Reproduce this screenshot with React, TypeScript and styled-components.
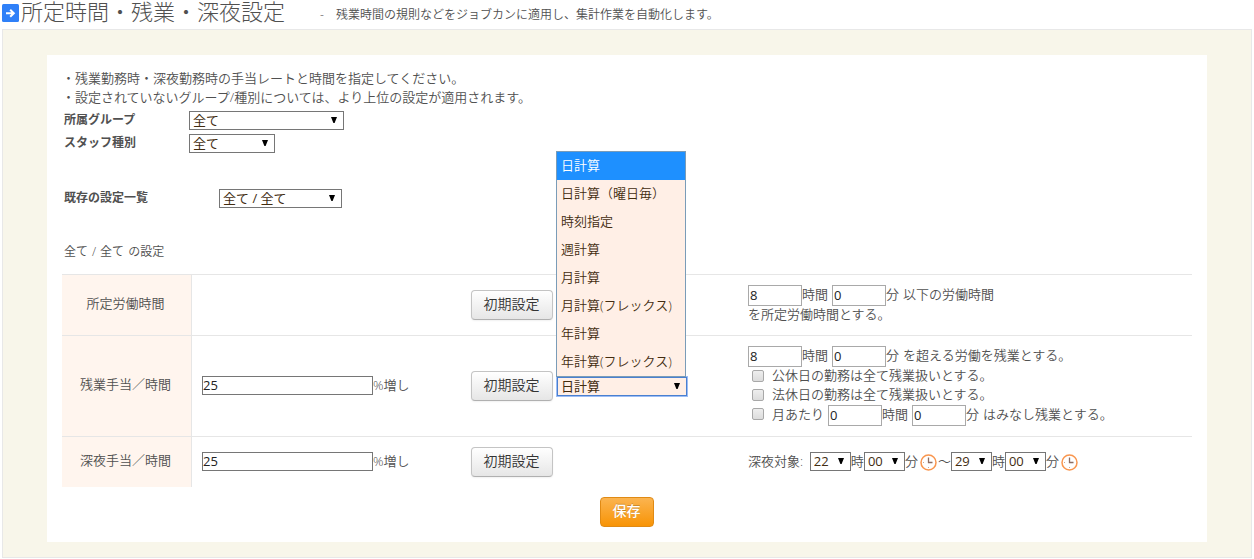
import React, { useId } from 'react';
import styled, { createGlobalStyle } from 'styled-components';

const GlobalStyle = createGlobalStyle`
  *, *::before, *::after { box-sizing: border-box; }
  body {
    margin: 0;
    background: #fff;
    color: #505050;
    font-family: "Open Sans", "Noto Sans CJK JP", sans-serif;
    font-size: 13px;
    font-weight: 350;
    line-height: 19px;
  }
  input, select, button { font: inherit; }
`;

const Header = styled.header`
  display: flex;
  align-items: flex-start;
  height: 29px;
  padding: 0 2px;
`;

const TitleIcon = styled.svg`
  flex: none;
  width: 17px;
  height: 18px;
  margin: 4px 2px 0 0;
`;

const Title = styled.h1`
  margin: 0;
  font-size: 22px;
  font-weight: 300;
  line-height: 22px;
  white-space: nowrap;
`;

const Lead = styled.p`
  display: flex;
  gap: 12px;
  margin: 5px 0 0 35px;
  font-size: 12px;
`;

const Frame = styled.main`
  margin: 0 2px 2px;
  padding: 25px 44px 15px;
  border: 1px solid #e8e8e8;
  background: #f8f6ea;
`;

const Sheet = styled.div`
  padding: 14px 15px 15px;
  background: #fff;
`;

const Note = styled.p`
  margin: 0 0 2px;
`;

const FilterRow = styled.div<{ $gap?: number; $labelWidth: number }>`
  display: grid;
  grid-template-columns: ${(p) => p.$labelWidth}px auto;
  justify-content: start;
  align-items: center;
  height: 23px;
  margin-top: ${(p) => p.$gap ?? 0}px;
  padding-left: 2px;
`;

const FilterLabel = styled.label`
  font-size: 12px;
  font-weight: 700;
  padding-bottom: 2px;
`;

const ScopeName = styled.p`
  display: flex;
  gap: 4px;
  margin: 32px 0 13px 2px;
  font-size: 12px;
`;

const SelectWrap = styled.span<{ $width: number }>`
  position: relative;
  display: inline-block;
  flex: none;
  width: ${(p) => p.$width}px;
  height: 19px;
`;

const SelectBox = styled.select<{ $active?: boolean }>`
  appearance: none;
  display: block;
  width: 100%;
  height: 19px;
  margin: 0;
  padding: 0 16px 0 3px;
  border: 1px solid ${(p) => (p.$active ? '#4a80d0' : '#767676')};
  border-radius: 0;
  outline: none;
  box-shadow: ${(p) => (p.$active ? '0 0 0 1px #9dbdf5' : 'none')};
  background: ${(p) => (p.$active ? '#ffefe6' : '#fff')};
  color: #422c10;
  font-weight: 400;
  line-height: 17px;
`;

const Arrow = styled.svg`
  position: absolute;
  top: 6px;
  right: 7px;
  width: 6px;
  height: 6px;
  pointer-events: none;
`;

const Options = styled.ul`
  position: absolute;
  z-index: 2;
  left: -1px;
  bottom: 19px;
  width: 130px;
  margin: 0;
  padding: 0;
  list-style: none;
  border: 1px solid #7a9cb8;
  background: #ffefe6;
  color: #422c10;
`;

const Option = styled.li<{ $selected?: boolean }>`
  height: 28px;
  padding-left: 4px;
  line-height: 27px;
  white-space: nowrap;
  background: ${(p) => (p.$selected ? '#1e90ff' : 'transparent')};
  color: ${(p) => (p.$selected ? '#fff' : 'inherit')};
`;

const Rules = styled.table`
  width: 100%;
  border-collapse: separate;
  border-spacing: 0;
  table-layout: fixed;
`;

const NameCol = styled.col`width: 130px;`;
const RateCol = styled.col`width: 269px;`;
const MethodCol = styled.col`width: 277px;`;

const NameCell = styled.th`
  padding: 8px 10px 11px 8px;
  border-top: 1px solid #e6e6e6;
  border-right: 1px solid #e6e6e6;
  background: #fff5ee;
  font-weight: inherit;
  text-align: center;
`;

const Cell = styled.td`
  padding: 10px;
  border-top: 1px solid #e6e6e6;
  vertical-align: middle;
`;

const Line = styled.div<{ $height: number }>`
  display: flex;
  align-items: flex-start;
  height: ${(p) => p.$height}px;
  line-height: ${(p) => p.$height - 2}px;
  white-space: pre;
`;

const Actions = styled.div`
  display: flex;
  align-items: center;
  gap: 4px;
  height: 30px;
`;

const RateInput = styled.input`
  width: 171px;
  height: 19px;
  padding: 0 0 2px;
  border: 1px solid #767676;
  color: #222;
  font-weight: 400;
`;

const HourInput = styled.input<{ $spaced?: boolean }>`
  flex: none;
  width: 54px;
  height: 21px;
  margin-left: ${(p) => (p.$spaced ? 4 : 0)}px;
  padding: 0 1px 2px;
  border: 1px solid #a9a9a9;
  color: #222;
  font-weight: 400;
`;

const Unit = styled.span`
  margin-right: 4px;
`;

const Check = styled.input`
  appearance: none;
  flex: none;
  width: 12px;
  height: 12px;
  margin: 3px 8px 0 4px;
  border: 1px solid #a8a8a8;
  border-radius: 2px;
  background: linear-gradient(#eee, #dcdcdc);
`;

const DefaultButton = styled.button`
  width: 82px;
  height: 30px;
  padding: 0 1px 4px 0;
  border: 1px solid #c4c4c4;
  border-bottom-color: #b0b0b0;
  border-radius: 4px;
  background: linear-gradient(#fff, #e6e6e6);
  box-shadow: 0 1px 2px rgba(0, 0, 0, 0.06);
  color: #333;
  font-size: 14px;
`;

const SaveButton = styled.button`
  display: block;
  width: 54px;
  height: 30px;
  margin: 10px auto 0;
  padding: 0 1px 4px 0;
  border: 1px solid #e08a14;
  border-radius: 4px;
  background: linear-gradient(#fbb450, #f89406);
  color: #fff;
  font-size: 14px;
  font-weight: 500;
  text-shadow: 0 -1px 0 rgba(0, 0, 0, 0.2);
`;

const ClockIcon = styled.svg`
  flex: none;
  width: 17px;
  height: 17px;
  margin: 2px 1px 0 2px;
`;

type SelectProps = {
  width: number;
  value: string;
  id?: string;
  label?: string;
  active?: boolean;
  children?: React.ReactNode;
};

function Select({ width, value, id, label, active, children }: SelectProps) {
  return (
    <SelectWrap $width={width}>
      <SelectBox id={id} aria-label={label} defaultValue={value} $active={active}>
        <option>{value}</option>
      </SelectBox>
      <Arrow viewBox="0 0 6 6" aria-hidden="true">
        <path d="M0 0h6L3.6 6H2.4z" fill="#000" />
      </Arrow>
      {children}
    </SelectWrap>
  );
}

function Clock() {
  return (
    <ClockIcon viewBox="0 0 17 17" aria-hidden="true">
      <circle cx="8.5" cy="8.5" r="7.5" fill="#fff" stroke="#f9964f" strokeWidth="1.5" />
      <path d="M8.5 3.5V8.5H12.5" fill="none" stroke="#8d6e63" strokeWidth="1.3" />
      <path d="M8 13.5h1M3 8.5h1" stroke="#c9a898" strokeWidth="1" />
    </ClockIcon>
  );
}

type FilterProps = { label: string; value: string; width: number; labelWidth: number; gap?: number };

function Filter({ label, value, width, labelWidth, gap }: FilterProps) {
  const id = useId();
  return (
    <FilterRow $labelWidth={labelWidth} $gap={gap}>
      <FilterLabel htmlFor={id}>{label}</FilterLabel>
      <Select id={id} width={width} value={value} />
    </FilterRow>
  );
}

function Duration({ hours, label }: { hours: string; label: string }) {
  return (
    <>
      <HourInput defaultValue={hours} aria-label={`${label} 時間`} />
      時間
      <HourInput $spaced defaultValue="0" aria-label={`${label} 分`} />
      <Unit>分</Unit>
    </>
  );
}

function TimePoint({ hour, label }: { hour: string; label: string }) {
  return (
    <>
      <Select width={41} value={hour} label={`${label} 時`} />
      時
      <Select width={41} value="00" label={`${label} 分`} />
      分
      <Clock />
    </>
  );
}

function CheckLine({ id, text }: { id: string; text: string }) {
  return (
    <Line $height={19}>
      <Check type="checkbox" id={id} />
      <label htmlFor={id}>{text}</label>
    </Line>
  );
}

const METHODS = [
  '日計算',
  '日計算（曜日毎）',
  '時刻指定',
  '週計算',
  '月計算',
  '月計算(フレックス)',
  '年計算',
  '年計算(フレックス)',
];

export default function App() {
  return (
    <>
      <GlobalStyle />
      <Header>
        <TitleIcon viewBox="0 0 17 18" aria-hidden="true">
          <rect width="17" height="18" rx="1.5" fill="#2f80f8" />
          <path d="M4 9.3h7.5M8.2 5.8l3.6 3.5-3.6 3.5" fill="none" stroke="#fff" strokeWidth="2" />
        </TitleIcon>
        <Title>所定時間・残業・深夜設定</Title>
        <Lead>
          <span>-</span>
          <span>残業時間の規則などをジョブカンに適用し、集計作業を自動化します。</span>
        </Lead>
      </Header>
      <Frame>
        <Sheet>
          <Note>
            ・残業勤務時・深夜勤務時の手当レートと時間を指定してください。
            <br />
            ・設定されていないグループ/種別については、より上位の設定が適用されます。
          </Note>
          <Filter label="所属グループ" value="全て" width={155} labelWidth={125} />
          <Filter label="スタッフ種別" value="全て" width={86} labelWidth={125} />
          <Filter label="既存の設定一覧" value="全て / 全て" width={123} labelWidth={155} gap={32} />
          <ScopeName>
            <span>全て</span>
            <span>/</span>
            <span>全て</span>
            <span>の設定</span>
          </ScopeName>
          <Rules>
            <colgroup>
              <NameCol />
              <RateCol />
              <MethodCol />
              <col />
            </colgroup>
            <tbody>
              <tr>
                <NameCell scope="row">所定労働時間</NameCell>
                <Cell />
                <Cell>
                  <Actions>
                    <DefaultButton type="button">初期設定</DefaultButton>
                  </Actions>
                </Cell>
                <Cell>
                  <Line $height={21}>
                    <Duration hours="8" label="所定労働時間" />
                    以下の労働時間
                  </Line>
                  <Line $height={19}>を所定労働時間とする。</Line>
                </Cell>
              </tr>
              <tr>
                <NameCell scope="row">残業手当／時間</NameCell>
                <Cell>
                  <Line $height={20}>
                    <RateInput defaultValue="25" aria-label="残業手当の割増率" />
                    %増し
                  </Line>
                </Cell>
                <Cell>
                  <Actions>
                    <DefaultButton type="button">初期設定</DefaultButton>
                    <Select width={130} value="日計算" label="残業の計算方法" active>
                      <Options role="listbox" aria-label="残業の計算方法">
                        {METHODS.map((name, i) => (
                          <Option key={name} role="option" aria-selected={i === 0} $selected={i === 0}>
                            {name}
                          </Option>
                        ))}
                      </Options>
                    </Select>
                  </Actions>
                </Cell>
                <Cell>
                  <Line $height={21}>
                    <Duration hours="8" label="残業" />
                    を超える労働を残業とする。
                  </Line>
                  <CheckLine id="public-holiday" text="公休日の勤務は全て残業扱いとする。" />
                  <CheckLine id="legal-holiday" text="法休日の勤務は全て残業扱いとする。" />
                  <Line $height={21}>
                    <Check type="checkbox" id="deemed" />
                    <Unit as="label" htmlFor="deemed">月あたり</Unit>
                    <Duration hours="0" label="みなし残業" />
                    はみなし残業とする。
                  </Line>
                </Cell>
              </tr>
              <tr>
                <NameCell scope="row">深夜手当／時間</NameCell>
                <Cell>
                  <Line $height={20}>
                    <RateInput defaultValue="25" aria-label="深夜手当の割増率" />
                    %増し
                  </Line>
                </Cell>
                <Cell>
                  <Actions>
                    <DefaultButton type="button">初期設定</DefaultButton>
                  </Actions>
                </Cell>
                <Cell>
                  <Line $height={20}>
                    {'深夜対象:  '}
                    <TimePoint hour="22" label="開始" />
                    〜
                    <TimePoint hour="29" label="終了" />
                  </Line>
                </Cell>
              </tr>
            </tbody>
          </Rules>
          <SaveButton type="button">保存</SaveButton>
        </Sheet>
      </Frame>
    </>
  );
}
